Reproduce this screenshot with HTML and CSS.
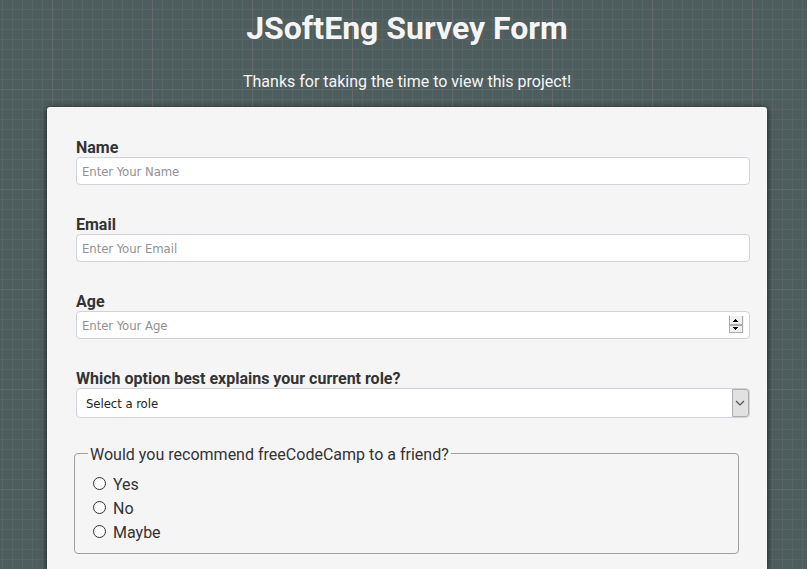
FILE: index.html
```html
<!DOCTYPE html>
<html lang="en">
<head>
<meta charset="utf-8">
<title>JSoftEng Survey Form</title>
<link rel="stylesheet" href="styles.css">
</head>
<body>
<header>
  <h1>JSoftEng Survey Form</h1>
  <p>Thanks for taking the time to view this project!</p>
</header>
<form class="card">
  <div class="field">
    <label for="name">Name</label>
    <input class="control" id="name" type="text" placeholder="Enter Your Name">
  </div>
  <div class="field">
    <label for="email">Email</label>
    <input class="control" id="email" type="email" placeholder="Enter Your Email">
  </div>
  <div class="field">
    <label for="age">Age</label>
    <div class="number">
      <input class="control" id="age" type="number" placeholder="Enter Your Age">
      <svg class="spinner" width="15" height="17" viewBox="0 0 15 17" shape-rendering="crispEdges">
        <path fill="#f0f0f0" d="M0 0h15v17H0z"/>
        <path fill="#acacac" d="M0 0h1v17H0zM13 0h1v17h-1zM0 8h14v2H0zM0 16h14v1H0z"/>
        <path d="M6 3h1v1H6zM5 4h3v1H5zM4 5h5v1H4zM4 11h5v1H4zM5 12h3v1H5zM6 13h1v1H6z"/>
      </svg>
    </div>
  </div>
  <div class="field">
    <label for="role">Which option best explains your current role?</label>
    <div class="select">
      <select class="control" id="role"><option>Select a role</option></select>
      <span class="drop"><svg width="10" height="6" viewBox="0 0 10 6"><path d="M1 1l4 4 4-4" fill="none" stroke="#505050" stroke-width="1.2"/></svg></span>
    </div>
  </div>
  <fieldset>
    <legend>Would you recommend freeCodeCamp to a friend?</legend>
    <label class="choice"><input type="radio" name="recommend">Yes</label>
    <label class="choice"><input type="radio" name="recommend">No</label>
    <label class="choice"><input type="radio" name="recommend">Maybe</label>
  </fieldset>
</form>
</body>
</html>
```
FILE: styles.css
```css
* { box-sizing: border-box; }

html, body { height: 100%; }

body {
  margin: 0;
  font: 16px/20px Roboto, sans-serif;
  color: #333;
  background-color: #4e5d5d;
  background-image:
    linear-gradient(90deg, #63696e 1px, transparent 1px),
    linear-gradient(#5e696a 1px, transparent 1px),
    linear-gradient(90deg, #576565 1px, transparent 1px),
    linear-gradient(#576565 1px, transparent 1px);
  background-size: 100px 100px, 100px 100px, 10px 10px, 10px 10px;
  background-position: 52px 0, 0 89px, 2px 0, 0 9px;
}

header {
  height: 107px;
  padding: 8px 0 0 7px;
  text-align: center;
  color: #f5f5f5;
}

h1 { margin: 0; font-size: 32px; line-height: 40px; font-weight: 700; }

header p { margin: 24px 0 0; }

.card {
  width: 720px;
  height: 462px;
  margin: 0 auto 0 47px;
  padding: 30px 17px 0 29px;
  background: #f5f5f5;
  border-radius: 3px 3px 0 0;
  box-shadow: 0 1px 6px rgba(0, 0, 0, .7);
  clip-path: inset(-10px -10px 0);
}

.field { margin-bottom: 29px; }

.field > label { display: block; height: 20px; line-height: 22px; font-weight: 700; }

.control {
  display: block;
  width: 100%;
  height: 28px;
  margin: 0;
  padding: 0 5px;
  border: 1px solid #ced4da;
  border-radius: 4px;
  background: #fff;
  color: #222;
  font: 13px "DejaVu Sans Condensed", "DejaVu Sans", sans-serif;
  letter-spacing: -.06px;
  appearance: none;
}

.control::placeholder { color: #919191; opacity: 1; }

.number, .select { position: relative; }

.number .control { appearance: textfield; }

.spinner { position: absolute; right: 6px; top: 5px; }

.select .control { height: 30px; padding-left: 9px; }

.drop {
  position: absolute;
  top: 1px;
  right: 1px;
  width: 17px;
  height: 28px;
  display: flex;
  align-items: center;
  justify-content: center;
  padding-right: 1px;
  border: 1px solid #adadad;
  border-radius: 0 3px 3px 0;
  background: #e1e1e1;
}

fieldset {
  width: 665px;
  height: 110px;
  margin: -3px 0 0 -2px;
  padding: 9px 18px 0;
  border: 1px solid #a0a0a0;
  border-radius: 4px;
}

legend { height: 19px; line-height: 22px; margin-left: -5px; padding: 0 2px; letter-spacing: .01px; }

.choice { display: flex; align-items: center; height: 24px; line-height: 24px; padding-top: 2px; }

.choice input {
  width: 13px;
  height: 13px;
  margin: 0 7px 4px 0;
  border: 1px solid #333;
  border-radius: 50%;
  background: #fff;
  appearance: none;
}
```
